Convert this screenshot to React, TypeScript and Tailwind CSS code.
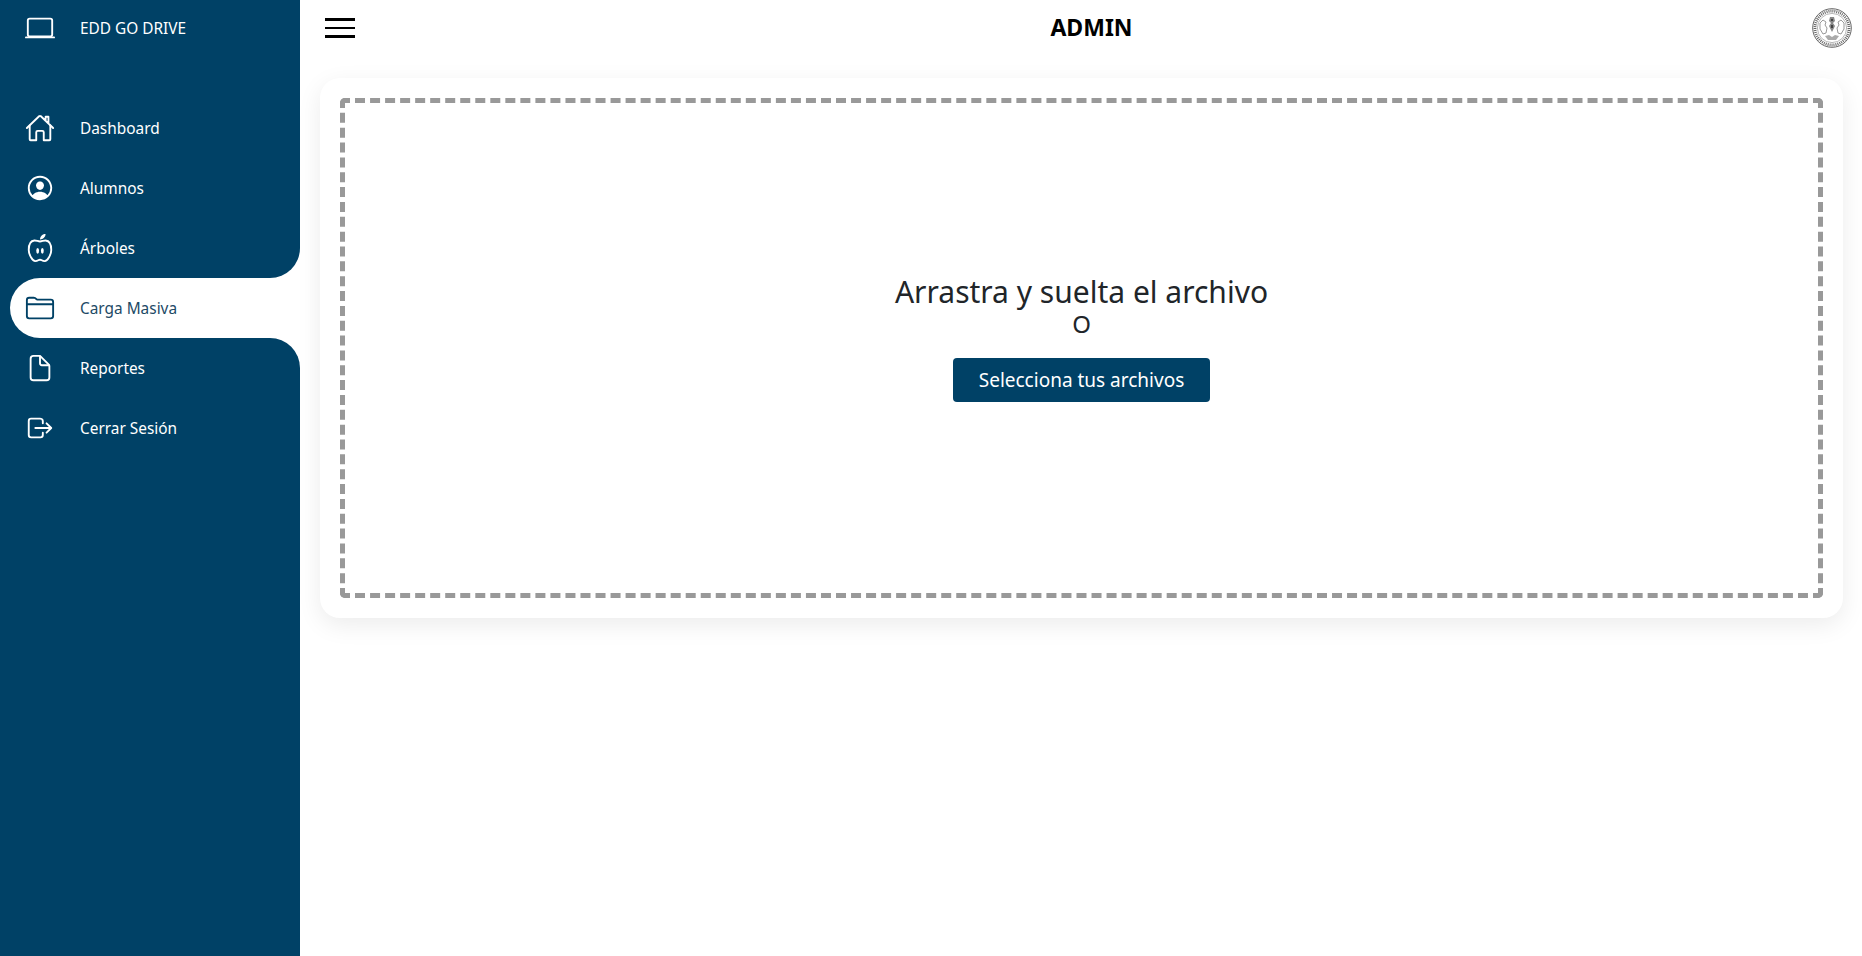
import {
  IoDocumentOutline,
  IoFolderOutline,
  IoHomeOutline,
  IoLaptopOutline,
  IoLogOutOutline,
  IoNutritionOutline,
  IoPersonCircleOutline,
} from "react-icons/io5"
import type { ReactNode } from "react"

const fontStack = "font-['Noto_Sans','Open_Sans',sans-serif]"

function NavRow({
  icon,
  label,
  className = "h-[60px]",
}: {
  icon: ReactNode
  label: string
  className?: string
}) {
  return (
    <div className={`flex items-center bg-[#004166] pl-[25px] text-white ${className}`}>
      <span className="flex w-[30px] justify-center text-[30px]">{icon}</span>
      <span className="ml-[25px] mt-[2px] text-[15.4px]">{label}</span>
    </div>
  )
}

function Seal() {
  return (
    <svg width="40" height="40" viewBox="0 0 40 40" className="block">
      <circle cx="20" cy="20" r="19.3" fill="#fff" stroke="#555" strokeWidth="0.9" />
      <circle cx="20" cy="20" r="17" fill="none" stroke="#666" strokeWidth="2.8" strokeDasharray="1 1" />
      <circle cx="20" cy="20" r="14.6" fill="none" stroke="#888" strokeWidth="0.6" />
      <path d="M8 15l3-3 3 2-1 3 2 3-1 5-3 1-3-5zM32 15l-3-3-3 2 1 3-2 3 1 5 3 1 3-5z" fill="none" stroke="#999" strokeWidth="1" />
      <path d="M13 28l4-1 3 2 3-2 4 1-3 4h-8z" fill="#aaa" />
      <path d="M18 9h4l1 4-2 2 2 3-3 6-3-6 2-3-2-2z" fill="#888" />
      <path d="M19 11h2v2h-2zM19 17h2v3h-2z" fill="#444" />
    </svg>
  )
}

export default function App() {
  return (
    <div className={`flex h-[956px] w-full overflow-hidden bg-white ${fontStack}`}>
      <aside className="h-full w-[300px] shrink-0 bg-[#004166]">
        <NavRow icon={<IoLaptopOutline />} label="EDD GO DRIVE" className="h-[56px]" />
        <div className="h-[42px]" />
        <NavRow icon={<IoHomeOutline />} label="Dashboard" />
        <NavRow icon={<IoPersonCircleOutline />} label="Alumnos" />
        <div className="bg-white">
          <NavRow icon={<IoNutritionOutline />} label="Árboles" className="h-[60px] rounded-br-[30px]" />
        </div>
        <div className="bg-[#004166] pl-[10px]">
          <div className="flex h-[60px] items-center rounded-l-[30px] bg-white pl-[15px] text-[#1d4a66]">
            <span className="flex w-[30px] justify-center text-[30px] text-[#004166]">
              <IoFolderOutline />
            </span>
            <span className="ml-[25px] mt-[2px] text-[15.4px]">Carga Masiva</span>
          </div>
        </div>
        <div className="bg-white">
          <NavRow icon={<IoDocumentOutline />} label="Reportes" className="h-[60px] rounded-tr-[30px]" />
        </div>
        <NavRow icon={<IoLogOutOutline />} label="Cerrar Sesión" />
      </aside>

      <main className="min-w-0 flex-1">
        <header className="flex h-[56px] items-center justify-between pl-[25px] pr-[10px]">
          <div className="flex w-[30px] flex-col gap-[6px]">
            <span className="h-[2.5px] bg-black" />
            <span className="h-[2.5px] bg-black" />
            <span className="h-[2.5px] bg-black" />
          </div>
          <h1 className="mb-[2px] ml-[16px] text-[23px] font-bold leading-[28px] text-black">ADMIN</h1>
          <Seal />
        </header>

        <section className="ml-[20px] mr-[19px] mt-[22px] h-[540px] rounded-[20px] bg-white p-[20px] shadow-[0_7px_25px_rgba(0,0,0,0.08)]">
          <div className="flex h-full flex-col items-center justify-center rounded-[5px] border-[5px] border-dashed border-[#999] pb-[20px] text-[#212529]">
            <h2 className="text-[30px] leading-[36px]">Arrastra y suelta el archivo</h2>
            <p className="text-[24px] leading-[28px]">O</p>
            <button className="mt-[20px] h-[44px] w-[257px] rounded-[4px] bg-[#004166] text-[19px] text-white">
              Selecciona tus archivos
            </button>
          </div>
        </section>
      </main>
    </div>
  )
}
